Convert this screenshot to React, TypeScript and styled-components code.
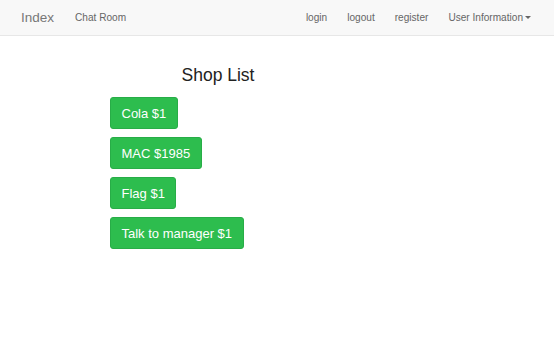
import React from 'react';
import styled, { createGlobalStyle } from 'styled-components';

const GlobalStyle = createGlobalStyle`
  html, body {
    margin: 0;
    padding: 0;
    background: #fff;
    font-family: "Liberation Sans", Arial, sans-serif;
  }
`;

const NavBar = styled.nav`
  height: 35px;
  background: #f8f8f8;
  border-bottom: 1px solid #e7e7e7;
  display: flex;
  align-items: center;
  justify-content: space-between;
  padding: 0 23px 0 21px;
`;

const NavGroup = styled.div`
  display: flex;
  align-items: center;
  gap: ${(p: { $gap: number }) => p.$gap}px;
`;

const Brand = styled.a`
  font-size: 13.5px;
  color: #777;
  margin-right: 21px;
`;

const NavLink = styled.a`
  font-size: 10.1px;
  color: #666;
  display: flex;
  align-items: center;
`;

const Caret = styled.span`
  display: inline-block;
  width: 0;
  height: 0;
  margin-left: 2px;
  border-top: 3px solid #666;
  border-left: 3px solid transparent;
  border-right: 3px solid transparent;
`;

const Main = styled.main`
  padding: 29px 0 0 110px;
  width: 216px;
`;

const Heading = styled.h3`
  margin: 0 0 11px;
  font-size: 17.5px;
  font-weight: 500;
  color: #222;
  text-align: center;
`;

const List = styled.div`
  display: flex;
  flex-direction: column;
  align-items: flex-start;
  gap: 8px;
`;

const BuyButton = styled.button`
  height: 32px;
  padding: 0 10.5px;
  background: #2dbd4e;
  border: 1px solid #28ad47;
  border-radius: 3px;
  color: #fff;
  font-family: "Liberation Sans", Arial, sans-serif;
  font-size: 13px;
  cursor: pointer;
`;

const items = ['Cola $1', 'MAC $1985', 'Flag $1', 'Talk to manager $1'];

export default function App() {
  return (
    <>
      <GlobalStyle />
      <NavBar>
        <NavGroup $gap={0}>
          <Brand>Index</Brand>
          <NavLink>Chat Room</NavLink>
        </NavGroup>
        <NavGroup $gap={20}>
          <NavLink>login</NavLink>
          <NavLink>logout</NavLink>
          <NavLink>register</NavLink>
          <NavLink>
            User Information
            <Caret />
          </NavLink>
        </NavGroup>
      </NavBar>
      <Main>
        <Heading>Shop List</Heading>
        <List>
          {items.map((item) => (
            <BuyButton key={item}>{item}</BuyButton>
          ))}
        </List>
      </Main>
    </>
  );
}
